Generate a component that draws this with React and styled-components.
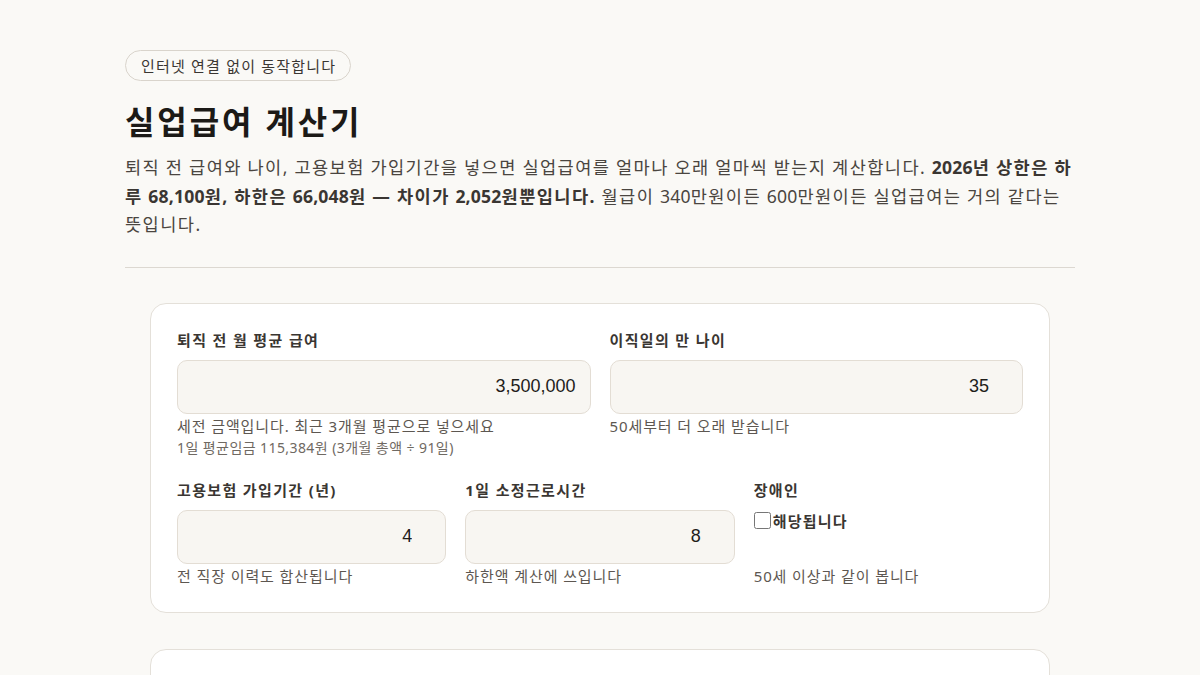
import styled, { createGlobalStyle } from "styled-components";

const GlobalStyle = createGlobalStyle`
  body {
    margin: 0;
    background: #faf9f6;
    color: #1f1d1a;
    font-family: "Noto Sans", "Noto Sans CJK KR", sans-serif;
  }
`;

const App = () => {
  return (
    <>
      <GlobalStyle />
      <Page>
        <Header>
          <Badge>인터넷 연결 없이 동작합니다</Badge>
          <Title>실업급여 계산기</Title>
          <Lead>
            퇴직 전 급여와 나이, 고용보험 가입기간을 넣으면 실업급여를 얼마나 오래
            얼마씩 받는지 계산합니다.{" "}
            <strong>
              <Num>2026</Num>년 상한은 하루 <Num>68,100</Num>원, 하한은{" "}
              <Num>66,048</Num>원 — 차이가 <Num>2,052</Num>원뿐입니다.
            </strong>{" "}
            월급이 <Num>340</Num>만원이든 <Num>600</Num>만원이든 실업급여는 거의
            같다는 뜻입니다.
          </Lead>
        </Header>

        <Card>
          <Row cols={2}>
            <Field>
              <Label>퇴직 전 월 평균 급여</Label>
              <Input type="text" defaultValue="3,500,000" />
              <Hint>세전 금액입니다. 최근 3개월 평균으로 넣으세요</Hint>
              <SubHint>1일 평균임금 115,384원 (3개월 총액 ÷ 91일)</SubHint>
            </Field>
            <Field>
              <Label>이직일의 만 나이</Label>
              <Input type="number" defaultValue="35" />
              <Hint>50세부터 더 오래 받습니다</Hint>
            </Field>
          </Row>
          <Row cols={3}>
            <Field>
              <Label>고용보험 가입기간 (년)</Label>
              <Input type="number" defaultValue="4" />
              <Hint>전 직장 이력도 합산됩니다</Hint>
            </Field>
            <Field>
              <Label>1일 소정근로시간</Label>
              <Input type="number" defaultValue="8" />
              <Hint>하한액 계산에 쓰입니다</Hint>
            </Field>
            <Field>
              <Label>장애인</Label>
              <CheckLabel>
                <Checkbox type="checkbox" />
                해당됩니다
              </CheckLabel>
              <Hint push>50세 이상과 같이 봅니다</Hint>
            </Field>
          </Row>
        </Card>

        <Card />
      </Page>
    </>
  );
};

export default App;

const Page = styled.main`
  width: 950px;
  margin: 0 auto;
  padding-top: 50px;
`;

const Header = styled.header`
  padding-bottom: 28px;
  border-bottom: 1px solid #dcd8d1;
  margin-bottom: 35px;
`;

const Badge = styled.span`
  display: inline-flex;
  align-items: center;
  box-sizing: border-box;
  height: 31px;
  padding: 0 14px 0 15px;
  border: 1px solid #d9d4cc;
  border-radius: 999px;
  font-size: 15px;
  letter-spacing: 0.08em;
  color: #3a3632;
`;

const Title = styled.h1`
  margin: 20px 0 10px;
  font-size: 32px;
  font-weight: 700;
  line-height: 42px;
  letter-spacing: 0.09em;
  color: #1c1a17;
`;

const Lead = styled.p`
  margin: 0;
  font-size: 17.6px;
  line-height: 28.5px;
  letter-spacing: 0.08em;
  word-spacing: -0.02em;
  color: #4a4540;

  strong {
    font-weight: 700;
    color: #3a3632;
  }
`;

/* digits keep their natural width; only hangul is spread */
const Num = styled.span`
  letter-spacing: 0.01em;
`;

const Card = styled.section`
  margin: 0 25px 36px;
  padding: 25px 26px 25px;
  background: #ffffff;
  border: 1px solid #e4e0d9;
  border-radius: 16px;
  min-height: 40px;
`;

const Row = styled.div`
  display: grid;
  grid-template-columns: repeat(${(p) => p.cols}, 1fr);
  column-gap: 19px;

  & + & {
    margin-top: 20px;
  }
`;

const Field = styled.div`
  display: flex;
  flex-direction: column;
`;

const Label = styled.label`
  font-size: 15px;
  font-weight: 700;
  letter-spacing: 0.09em;
  color: #3a3632;
  line-height: 22px;
  margin-bottom: 9px;
`;

const Input = styled.input`
  box-sizing: border-box;
  height: 54px;
  width: 100%;
  padding: 0 ${(p) => (p.type === "number" ? "33px" : "14px")} 0 14px;
  border: 1px solid #e3ddd4;
  border-radius: 10px;
  background: #f8f6f2;
  font-family: "Liberation Sans", "Noto Sans", sans-serif;
  font-size: 18px;
  color: #1f1d1a;
  text-align: right;
  -moz-appearance: textfield;

  &::-webkit-inner-spin-button,
  &::-webkit-outer-spin-button {
    -webkit-appearance: none;
    margin: 0;
  }
`;

const Hint = styled.div`
  margin-top: ${(p) => (p.push ? "auto" : "1px")};
  font-size: 15px;
  line-height: 22px;
  letter-spacing: 0.06em;
  color: #5d5751;
`;

const SubHint = styled.div`
  font-size: 14px;
  line-height: 22px;
  letter-spacing: 0.03em;
  color: #6f6962;
`;

const CheckLabel = styled.label`
  display: flex;
  align-items: center;
  gap: 2px;
  font-size: 15px;
  font-weight: 700;
  letter-spacing: 0.08em;
  color: #3a3632;
  line-height: 22px;
`;

const Checkbox = styled.input`
  width: 17px;
  height: 17px;
  margin: 0;
  accent-color: #3a3632;
`;
